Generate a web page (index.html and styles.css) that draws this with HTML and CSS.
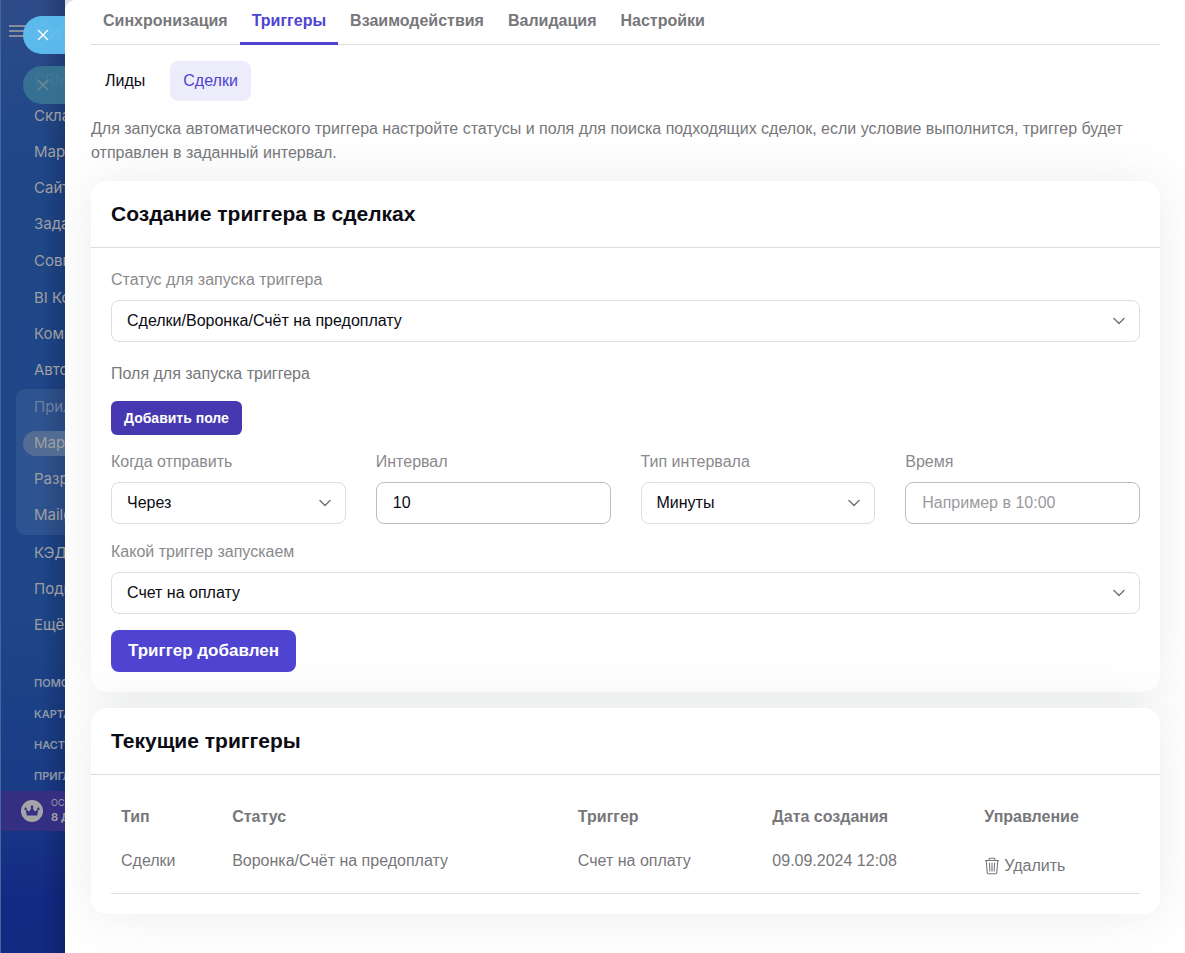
FILE: index.html
```html
<!DOCTYPE html>
<html lang="ru">
<head>
<meta charset="utf-8">
<meta name="viewport" content="width=device-width, initial-scale=1">
<title>Триггеры</title>
<link rel="stylesheet" href="styles.css">
</head>
<body>
<div class="app">
  <aside class="sidebar">
    <header class="sidebar-head">
      <svg class="burger" viewBox="0 0 20 12" aria-hidden="true"><path d="M0 1h20M0 6h20M0 11h20"/></svg>
      <span class="brand">Бит</span>
    </header>
    <nav class="menu">
      <a class="menu-link" href="#">CRM</a>
      <a class="menu-link" href="#">Скла</a>
      <a class="menu-link" href="#">Мар</a>
      <a class="menu-link" href="#">Сайт</a>
      <a class="menu-link" href="#">Зада</a>
      <a class="menu-link" href="#">Совм</a>
      <a class="menu-link" href="#">BI Ко</a>
      <a class="menu-link" href="#">Комп</a>
      <a class="menu-link" href="#">Авто</a>
      <div class="menu-group">
        <a class="menu-link muted" href="#">Прил</a>
        <a class="menu-link current" href="#"><span>Мар</span></a>
        <a class="menu-link" href="#">Разр</a>
        <a class="menu-link" href="#">Mailg</a>
      </div>
      <a class="menu-link" href="#">КЭД</a>
      <a class="menu-link" href="#">Подп</a>
      <a class="menu-link" href="#">Ещё</a>
    </nav>
    <nav class="extra">
      <a class="extra-link" href="#">ПОМО</a>
      <a class="extra-link" href="#">КАРТА</a>
      <a class="extra-link" href="#">НАСТР</a>
      <a class="extra-link" href="#">ПРИГЛ</a>
    </nav>
    <div class="plan">
      <svg class="crown" viewBox="0 0 22 22" aria-hidden="true"><circle cx="11" cy="11" r="11"/><path d="M5.8 15.5 4.6 9.2l3.6 2.3L11 7l2.8 4.5 3.6-2.3-1.2 6.3z"/><circle class="gem" cx="4.6" cy="8.7" r="1.2"/><circle class="gem" cx="11" cy="6.9" r="1.3"/><circle class="gem" cx="17.4" cy="8.7" r="1.2"/></svg>
      <div class="plan-text"><span>ОСТ</span><b>8 Д</b></div>
    </div>
    <button class="closer closer-main" type="button" aria-label="Закрыть"><svg viewBox="0 0 10 10"><path d="M0 0l10 10M10 0L0 10"/></svg></button>
    <button class="closer closer-back" type="button" aria-label="Закрыть предыдущий"><svg viewBox="0 0 10 10"><path d="M0 0l10 10M10 0L0 10"/></svg></button>
  </aside>

  <main class="panel">
    <nav class="tabs">
      <a class="tab" href="#">Синхронизация</a>
      <a class="tab active" href="#">Триггеры</a>
      <a class="tab" href="#">Взаимодействия</a>
      <a class="tab" href="#">Валидация</a>
      <a class="tab" href="#">Настройки</a>
    </nav>
    <nav class="pills">
      <a class="pill" href="#">Лиды</a>
      <a class="pill active" href="#">Сделки</a>
    </nav>
    <p class="lead">Для запуска автоматического триггера настройте статусы и поля для поиска подходящих сделок, если условие выполнится, триггер будет отправлен в заданный интервал.</p>

    <section class="card">
      <h2 class="card-title">Создание триггера в сделках</h2>
      <form class="card-body form">
        <div class="field">
          <label for="status">Статус для запуска триггера</label>
          <div class="select"><select id="status"><option>Сделки/Воронка/Счёт на предоплату</option></select><svg viewBox="0 0 12 12" aria-hidden="true"><path d="M1 3.5l5 5 5-5"/></svg></div>
        </div>
        <div class="fields-block">
          <p class="caption">Поля для запуска триггера</p>
          <button class="btn btn-small" type="button">Добавить поле</button>
        </div>
        <div class="row">
          <div class="field">
            <label for="when">Когда отправить</label>
            <div class="select"><select id="when"><option>Через</option></select><svg viewBox="0 0 12 12" aria-hidden="true"><path d="M1 3.5l5 5 5-5"/></svg></div>
          </div>
          <div class="field">
            <label for="interval">Интервал</label>
            <input id="interval" type="text" value="10">
          </div>
          <div class="field">
            <label for="unit">Тип интервала</label>
            <div class="select"><select id="unit"><option>Минуты</option></select><svg viewBox="0 0 12 12" aria-hidden="true"><path d="M1 3.5l5 5 5-5"/></svg></div>
          </div>
          <div class="field">
            <label for="time">Время</label>
            <input id="time" type="text" placeholder="Например в 10:00">
          </div>
        </div>
        <div class="field">
          <label for="trigger">Какой триггер запускаем</label>
          <div class="select"><select id="trigger"><option>Счет на оплату</option></select><svg viewBox="0 0 12 12" aria-hidden="true"><path d="M1 3.5l5 5 5-5"/></svg></div>
        </div>
        <button class="btn btn-main" type="button">Триггер добавлен</button>
      </form>
    </section>

    <section class="card">
      <h2 class="card-title">Текущие триггеры</h2>
      <div class="card-body">
        <table class="table">
          <colgroup><col class="c-type"><col class="c-status"><col class="c-trigger"><col class="c-date"><col></colgroup>
          <thead><tr><th>Тип</th><th>Статус</th><th>Триггер</th><th>Дата создания</th><th>Управление</th></tr></thead>
          <tbody><tr>
            <td>Сделки</td><td>Воронка/Счёт на предоплату</td><td>Счет на оплату</td><td>09.09.2024 12:08</td>
            <td><button class="remove" type="button"><svg viewBox="0 0 16 18" aria-hidden="true"><path d="M1 3.5h14M5 3.5V2.2a1 1 0 0 1 1-1h4a1 1 0 0 1 1 1v1.3M2.2 3.5l1 12a1.2 1.2 0 0 0 1.2 1.2h7.2a1.2 1.2 0 0 0 1.2-1.2l1-12M5.4 5.8l.5 8.6M8 5.8v8.6M10.6 5.8l-.5 8.6"/></svg>Удалить</button></td>
          </tr></tbody>
        </table>
      </div>
    </section>
  </main>
</div>
</body>
</html>
```
FILE: styles.css
```css
* { box-sizing: border-box; }

body {
  margin: 0;
  font: 16px/24px "Liberation Sans", Arial, sans-serif;
  color: #77777b;
  background: #122a80;
}

a { color: inherit; text-decoration: none; }
button, input, select { font: inherit; }

.app {
  display: flex;
  min-height: 100vh;
  background: #d9e0ea;
}

/* Sidebar */
.sidebar {
  position: relative;
  flex: 0 0 65px;
  overflow: hidden;
  border-left: 1px solid #48659d;
  background:
    linear-gradient(90deg, transparent 40px, rgba(0, 0, 30, .2)),
    linear-gradient(180deg, #2d4b88 0, #1f4788 160px, #1e4688 620px, #1a3b86 790px, #122a84 900px, #122a80 100%);
  font-family: Inter, sans-serif;
  color: #9d9fa2;
  white-space: nowrap;
}

.sidebar-head {
  display: flex;
  align-items: center;
  gap: 5px;
  height: 62px;
  padding-left: 8px;
}

.burger {
  flex: none;
  width: 20px;
  height: 12px;
  fill: none;
  stroke: #858c9c;
  stroke-width: 2;
}

.brand { font-size: 22px; font-weight: 700; }

.menu-link {
  display: flex;
  align-items: center;
  height: 36px;
  padding-left: 33px;
  font-size: 15px;
}

.menu > .menu-link:nth-child(5),
.menu > .menu-link:nth-child(6),
.menu > .menu-link:nth-child(9) { margin-bottom: 1px; }

.menu-group {
  margin-left: 15px;
  padding-bottom: 2px;
  border-radius: 9px 0 0 9px;
  background: rgba(255, 255, 255, .07);
}

.menu-group .menu-link { padding-left: 18px; }
.menu-group .muted { color: #6f7f9d; }
.menu-group .current { padding-left: 7px; }

.current span {
  flex: 1;
  height: 25px;
  padding-left: 11px;
  border-radius: 13px 0 0 13px;
  background: #526c93;
}

.extra { padding-top: 24px; }

.extra-link {
  display: flex;
  align-items: center;
  height: 31px;
  padding-left: 33px;
  font-size: 11px;
  font-weight: 600;
  color: #8d96a6;
}

.plan {
  display: flex;
  align-items: center;
  gap: 8px;
  height: 40px;
  padding-left: 20px;
  background: #352f84;
}

.crown { flex: none; width: 22px; height: 22px; fill: #a5a5a8; }
.crown path, .crown .gem { fill: #352f84; }

.plan-text {
  display: flex;
  flex-direction: column;
  padding-bottom: 2px;
  font-size: 9px;
  line-height: 14px;
}

.plan-text b { font-size: 11px; }

.closer {
  position: absolute;
  left: 22px;
  right: 0;
  display: flex;
  align-items: center;
  height: 38px;
  padding: 0 0 0 15px;
  border: 0;
  border-radius: 19px 0 0 19px;
}

.closer svg { width: 10px; height: 10px; overflow: visible; fill: none; stroke: currentColor; stroke-width: 1.4; }
.closer-main { top: 16px; color: #fff; background: rgba(95, 189, 240, .96); }
.closer-back { top: 66px; color: #6f8a95; background: rgba(55, 116, 146, .92); }

/* Panel */
.panel {
  flex: 1;
  min-width: 0;
  padding: 0 25px 39px 26px;
  border-top-left-radius: 10px;
  background: #fff;
}

.tabs { display: flex; border-bottom: 1px solid #dddde0; }

.tab {
  height: 45px;
  margin-bottom: -1px;
  padding: 9px 12px;
  font-weight: 700;
  border-bottom: 3px solid transparent;
}

.tab.active { color: #4f43d1; border-color: #4f43d1; }

.pills { display: flex; gap: 12px; padding: 16px 0 16px 1px; }

.pill {
  padding: 8px 13px;
  border-radius: 8px;
  color: #0b0b13;
}

.pill.active { color: #4f43d1; background: #edecfa; }

.lead { margin: 0 0 16px; }

.card {
  margin-bottom: 16px;
  border-radius: 16px;
  background: #fff;
  box-shadow: 0 0 50px rgba(82, 96, 105, .12);
}

.card:last-child { margin-bottom: 0; }

.card-title {
  margin: 0;
  padding: 18px 20px;
  border-bottom: 1px solid #dddde0;
  font-size: 21px;
  line-height: 30px;
  color: #0b0b13;
}

.card-body { padding: 20px; }
.form { display: flex; flex-direction: column; align-items: stretch; gap: 16px; }
.field { display: flex; flex-direction: column; gap: 8px; min-width: 0; color: #8a8a8d; }
.fields-block { margin-bottom: -1px; }
.caption { margin: 0 0 15px; padding-top: 4px; }
.row { display: grid; grid-template-columns: repeat(4, minmax(0, 1fr)); gap: 30px; }
.select { display: grid; align-items: center; }
.select > * { grid-area: 1 / 1; }

.select svg {
  justify-self: end;
  width: 12px;
  height: 12px;
  margin-right: 15px;
  fill: none;
  stroke: #77777b;
  stroke-width: 1.5;
  stroke-linecap: round;
  stroke-linejoin: round;
  pointer-events: none;
}

select, input {
  width: 100%;
  height: 42px;
  padding: 0 16px;
  border: 1px solid #dddde0;
  border-radius: 8px;
  color: #0b0b13;
  background: #fff;
  appearance: none;
}

select { padding: 0 15px; }
input { border-color: #bdbdc0; }
input::placeholder { color: #9a9a9d; opacity: 1; }

.btn {
  align-self: flex-start;
  border: 0;
  color: #fff;
  font-weight: 700;
}

.btn-small { display: block; height: 34px; padding: 0 13px; border-radius: 6px; font-size: 14px; background: #4538b0; }
.btn-main { height: 42px; padding: 0 17px; border-radius: 8px; font-size: 17px; background: #4f43d1; }

.table { width: 100%; table-layout: fixed; border-collapse: collapse; border-bottom: 1px solid #dddde0; }
.c-type { width: 10.8%; }
.c-status { width: 33.6%; }
.c-trigger { width: 18.9%; }
.c-date { width: 20.6%; }
th, td { padding: 10px; text-align: left; vertical-align: top; }
td { padding-bottom: 15px; }

.remove {
  display: flex;
  align-items: center;
  gap: 4px;
  margin-top: 5px;
  padding: 0;
  border: 0;
  color: inherit;
  background: none;
}

.remove svg { width: 16px; height: 18px; fill: none; stroke: currentColor; stroke-width: 1.1; }
```
